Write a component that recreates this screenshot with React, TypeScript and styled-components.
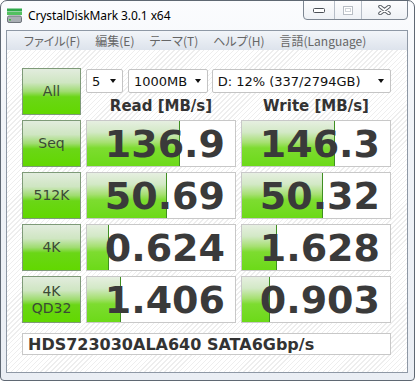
import React from "react";
import styled, { createGlobalStyle } from "styled-components";

const Global = createGlobalStyle`
  html, body { margin: 0; padding: 0; background: #ffffff; overflow: hidden; }
  * { box-sizing: border-box; }
`;

const Window = styled.div`
  width: 415px;
  height: 381px;
  border: 1px solid #5f6873;
  border-radius: 7px 7px 4px 4px;
  background: linear-gradient(to bottom, #fbfcfe 0%, #f1f4f8 30%, #eaeef4 100%);
  display: flex;
  flex-direction: column;
  padding: 0 6px 7px 5px;
  font-family: "DejaVu Sans", sans-serif;
  overflow: hidden;
`;

const TitleBar = styled.div`
  height: 29px;
  display: flex;
  justify-content: space-between;
  align-items: flex-start;
`;

const TitleLeft = styled.div`
  height: 29px;
  display: flex;
  align-items: center;
  gap: 6px;
  padding-left: 1px;
`;

const TitleText = styled.span`
  font-family: "Noto Sans", "DejaVu Sans", sans-serif;
  font-size: 12px;
  color: #000;
  letter-spacing: -0.1px;
`;

const CaptionGroup = styled.div`
  display: flex;
  height: 20px;
  margin-top: -1px;
  border: 1px solid #7d8692;
  border-radius: 0 0 4px 4px;
  overflow: hidden;
  background: linear-gradient(to bottom, #fdfdfe, #eef1f5);
`;

const CaptionButton = styled.div<{ $w: number; $first?: boolean }>`
  width: ${(p) => p.$w}px;
  height: 100%;
  display: flex;
  align-items: center;
  justify-content: center;
  border-left: ${(p) => (p.$first ? "none" : "1px solid #b6bdc7")};
`;

const Inner = styled.div`
  flex: 1;
  border: 1px solid #8e98a5;
  display: flex;
  flex-direction: column;
  background: #fff;
`;

const MenuBar = styled.div`
  height: 19px;
  background: linear-gradient(to bottom, #f2f5f9, #dde3ec);
  display: flex;
  align-items: center;
  gap: 15px;
  padding-left: 17px;
  font-family: "Noto Sans CJK JP", "Noto Sans", sans-serif;
  font-feature-settings: "palt";
  font-size: 12px;
  color: #666666;
`;

const MenuItem = styled.span`
  line-height: 19px;
`;

const Client = styled.div`
  flex: 1;
  padding: 18px 0 0 15px;
  background: repeating-linear-gradient(
    135deg,
    #ffffff 0px,
    #ffffff 2.5px,
    #eeeeee 2.5px,
    #eeeeee 3.5px
  );
`;

const Grid = styled.div`
  display: grid;
  grid-template-columns: 59px 150px 150px;
  grid-template-rows: repeat(5, 47px) 27px;
  column-gap: 5px;
  row-gap: 5px;
`;

const GreenButton = styled.div`
  border: 1px solid #7e9a78;
  background: linear-gradient(
    to bottom,
    #e2ecde 0%,
    #cfe6c2 30%,
    #9fdc70 50%,
    #6ad616 62%,
    #62d800 100%
  );
  display: flex;
  flex-direction: column;
  align-items: center;
  justify-content: center;
  font-family: "DejaVu Sans", sans-serif;
  font-size: 14px;
  line-height: 17px;
  color: #3b4a35;
`;

const TopControls = styled.div`
  grid-column: 2 / span 2;
  display: flex;
  flex-direction: column;
`;

const SelectRow = styled.div`
  display: flex;
  height: 24px;
  margin-top: 1px;
`;

const Select = styled.div<{ $w: number; $gap: number }>`
  width: ${(p) => p.$w}px;
  margin-right: ${(p) => p.$gap}px;
  height: 24px;
  border: 1px solid #c4c4c4;
  border-radius: 2px;
  background: #fff;
  display: flex;
  align-items: center;
  justify-content: space-between;
  padding: 0 6px 0 5px;
  font-size: 13px;
  color: #111;
`;

const Arrow = styled.span`
  width: 0;
  height: 0;
  border-left: 3.5px solid transparent;
  border-right: 3.5px solid transparent;
  border-top: 4px solid #111;
`;

const Headers = styled.div`
  flex: 1;
  display: grid;
  grid-template-columns: 150px 150px;
  column-gap: 5px;
  align-items: end;
`;

const HeaderText = styled.div`
  text-align: center;
  font-weight: bold;
  font-size: 15px;
  line-height: 15px;
  margin-bottom: 1px;
  color: #333;
`;

const ValueBox = styled.div`
  position: relative;
  border: 1px solid #c8c8c8;
  background: #fff;
  overflow: hidden;
  display: flex;
  align-items: center;
  justify-content: flex-end;
  padding-right: 10px;
`;

const Bar = styled.div`
  position: absolute;
  left: 0;
  top: 0;
  bottom: 0;
  border-right: 1px solid #3f8f22;
  background: linear-gradient(
    to bottom,
    #e6efe1 0%,
    #d3e9c6 25%,
    #a5e070 48%,
    #7ddc30 60%,
    #6cda18 100%
  );
`;

const Value = styled.span`
  position: relative;
  font-weight: bold;
  font-size: 38px;
  line-height: 1;
  color: #3a3a3a;
`;

const ModelBox = styled.div`
  grid-column: 1 / span 3;
  margin-top: 5px;
  border: 1px solid #c8c8c8;
  background: #fff;
  display: flex;
  align-items: center;
  padding-left: 5px;
  font-weight: bold;
  font-size: 16px;
  color: #333;
`;

const AppIcon = () => (
  <svg width="15" height="15" viewBox="0 0 15 15">
    <rect x="0" y="0.5" width="15" height="3" fill="#2fa94a" />
    <rect x="0" y="4" width="15" height="3" fill="#52c060" />
    <rect x="0.5" y="8" width="14" height="6.5" rx="1.5" fill="#a9aeb4" stroke="#6f757c" />
    <rect x="2" y="11" width="2" height="1.5" fill="#3fbf3f" />
  </svg>
);

const MinIcon = () => (
  <svg width="14" height="8" viewBox="0 0 14 8">
    <rect x="1.5" y="2.5" width="11" height="4" rx="1" fill="#fff" stroke="#4a4f56" />
  </svg>
);

const MaxIcon = () => (
  <svg width="12" height="11" viewBox="0 0 12 11">
    <rect x="1.5" y="1.5" width="9" height="8" fill="#fff" stroke="#b8bdc4" />
    <rect x="3.5" y="3.5" width="5" height="3" fill="none" stroke="#cfd3d8" />
  </svg>
);

const CloseIcon = () => (
  <svg width="13" height="10" viewBox="0 0 13 10">
    <path d="M2 1.5 L11 8.5 M11 1.5 L2 8.5" stroke="#565b62" strokeWidth="3.6" strokeLinecap="round" />
    <path d="M2 1.5 L11 8.5 M11 1.5 L2 8.5" stroke="#ffffff" strokeWidth="1.6" strokeLinecap="round" />
  </svg>
);

type Row = { label: string[]; read: string; write: string; rw: number; ww: number };

const rows: Row[] = [
  { label: ["Seq"], read: "136.9", write: "146.3", rw: 93, ww: 93 },
  { label: ["512K"], read: "50.69", write: "50.32", rw: 80, ww: 81 },
  { label: ["4K"], read: "0.624", write: "1.628", rw: 22, ww: 35 },
  { label: ["4K", "QD32"], read: "1.406", write: "0.903", rw: 34, ww: 28 },
];

export default function App() {
  return (
    <>
      <Global />
      <Window>
        <TitleBar>
          <TitleLeft>
            <AppIcon />
            <TitleText>CrystalDiskMark 3.0.1 x64</TitleText>
          </TitleLeft>
          <CaptionGroup>
            <CaptionButton $w={30} $first>
              <MinIcon />
            </CaptionButton>
            <CaptionButton $w={27}>
              <MaxIcon />
            </CaptionButton>
            <CaptionButton $w={46}>
              <CloseIcon />
            </CaptionButton>
          </CaptionGroup>
        </TitleBar>
        <Inner>
          <MenuBar>
            <MenuItem>ファイル(F)</MenuItem>
            <MenuItem>編集(E)</MenuItem>
            <MenuItem>テーマ(T)</MenuItem>
            <MenuItem>ヘルプ(H)</MenuItem>
            <MenuItem>言語(Language)</MenuItem>
          </MenuBar>
          <Client>
            <Grid>
              <GreenButton>All</GreenButton>
              <TopControls>
                <SelectRow>
                  <Select $w={37} $gap={5}>
                    <span>5</span>
                    <Arrow />
                  </Select>
                  <Select $w={80} $gap={4}>
                    <span>1000MB</span>
                    <Arrow />
                  </Select>
                  <Select $w={180} $gap={0}>
                    <span>D: 12% (337/2794GB)</span>
                    <Arrow />
                  </Select>
                </SelectRow>
                <Headers>
                  <HeaderText>Read [MB/s]</HeaderText>
                  <HeaderText>Write [MB/s]</HeaderText>
                </Headers>
              </TopControls>
              {rows.map((r) => (
                <React.Fragment key={r.label.join(" ")}>
                  <GreenButton>
                    {r.label.map((l) => (
                      <span key={l}>{l}</span>
                    ))}
                  </GreenButton>
                  <ValueBox>
                    <Bar style={{ width: r.rw }} />
                    <Value>{r.read}</Value>
                  </ValueBox>
                  <ValueBox>
                    <Bar style={{ width: r.ww }} />
                    <Value>{r.write}</Value>
                  </ValueBox>
                </React.Fragment>
              ))}
              <ModelBox>HDS723030ALA640 SATA6Gbp/s</ModelBox>
            </Grid>
          </Client>
        </Inner>
      </Window>
    </>
  );
}
